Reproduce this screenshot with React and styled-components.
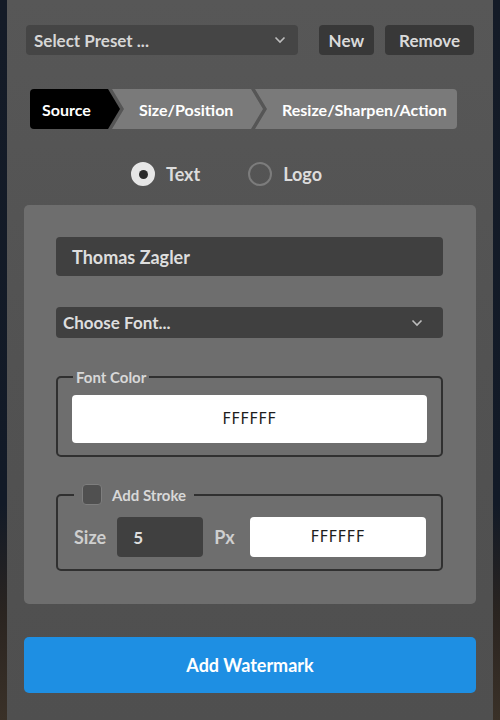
import React, { useState } from 'react';
import styled, { createGlobalStyle } from 'styled-components';

const GlobalStyle = createGlobalStyle`
  html, body {
    margin: 0;
    padding: 0;
    background: #121925;
  }
  body {
    font-family: 'Source Sans Pro', Lato, 'Liberation Sans', sans-serif;
  }
  * {
    box-sizing: border-box;
  }
`;

const Backdrop = styled.div`
  width: 500px;
  height: 720px;
  padding: 0 7px;
  background: linear-gradient(180deg, #141b27 0%, #121a27 70%, #2a2420 85%, #3a3128 100%);
`;

const Panel = styled.div`
  height: 720px;
  background: linear-gradient(180deg, #575757 0%, #525252 50%, #4f4f4f 100%);
  padding: 25px 17px 0 17px;
  display: flex;
  flex-direction: column;
`;

const TopBar = styled.div`
  display: flex;
  align-items: center;
  padding: 0 2px;
  gap: 11px;
`;

const PresetSelect = styled.div`
  width: 273px;
  height: 30px;
  margin-right: 10px;
  background: #454545;
  border-radius: 4px;
  display: flex;
  align-items: center;
  justify-content: space-between;
  padding: 0 12px 0 8px;
  color: #d6d6d6;
  font-size: 17px;
  font-weight: 700;
`;

const DarkButton = styled.button`
  height: 30px;
  padding: 0 ${({ $pad }) => $pad}px;
  background: #383838;
  border: none;
  border-radius: 4px;
  color: #dadada;
  font-family: inherit;
  font-size: 17px;
  font-weight: 700;
`;

const Steps = styled.div`
  display: flex;
  margin: 34px 0 0 6px;
  height: 40px;
`;

const Step = styled.div`
  height: 40px;
  display: flex;
  align-items: center;
  color: #fff;
  font-size: 16px;
  font-weight: 700;
  background: ${({ $active }) => ($active ? '#000' : '#7a7a7a')};
  border-radius: ${({ $first, $last }) => ($first ? '4px 0 0 4px' : $last ? '0 4px 4px 0' : '0')};
  width: ${({ $w }) => $w}px;
  margin-left: ${({ $first }) => ($first ? 0 : -8)}px;
  padding-left: ${({ $first }) => ($first ? 12 : 27)}px;
  clip-path: ${({ $first, $last }) =>
    $first
      ? 'polygon(0 0, calc(100% - 12px) 0, 100% 50%, calc(100% - 12px) 100%, 0 100%)'
      : $last
      ? 'polygon(0 0, 100% 0, 100% 100%, 0 100%, 12px 50%)'
      : 'polygon(0 0, calc(100% - 12px) 0, 100% 50%, calc(100% - 12px) 100%, 0 100%, 12px 50%)'};
`;

const RadioRow = styled.div`
  display: flex;
  gap: 48px;
  margin: 33px 0 0 107px;
  height: 24px;
`;

const RadioLabel = styled.label`
  display: flex;
  align-items: center;
  gap: 11px;
  color: #dcdcdc;
  font-size: 18px;
  font-weight: 700;
`;

const RadioCircle = styled.span`
  width: 24px;
  height: 24px;
  border-radius: 50%;
  display: flex;
  align-items: center;
  justify-content: center;
  background: ${({ $on }) => ($on ? '#e6e6e6' : 'transparent')};
  border: 2px solid ${({ $on }) => ($on ? '#e6e6e6' : '#7c7c7c')};

  &::after {
    content: '';
    width: 9px;
    height: 9px;
    border-radius: 50%;
    background: ${({ $on }) => ($on ? '#2a2a2a' : 'transparent')};
  }
`;

const Card = styled.div`
  margin-top: 19px;
  background: #6e6e6e;
  border-radius: 5px;
  padding: 32px 33px 33px 32px;
  display: flex;
  flex-direction: column;
`;

const NameInput = styled.div`
  height: 39px;
  background: #404040;
  border-radius: 4px;
  display: flex;
  align-items: center;
  padding-left: 16px;
  color: #dedede;
  font-size: 18px;
  font-weight: 700;
`;

const FontSelect = styled.div`
  height: 31px;
  margin-top: 31px;
  background: #404040;
  border-radius: 4px;
  display: flex;
  align-items: center;
  justify-content: space-between;
  padding: 0 20px 0 7px;
  color: #dedede;
  font-size: 17px;
  font-weight: 700;
`;

const Fieldset = styled.fieldset`
  margin: ${({ $top }) => $top}px 0 0 0;
  border: 2px solid #303030;
  border-radius: 5px;
  padding: ${({ $pad }) => $pad};
  min-width: 0;
`;

const Legend = styled.legend`
  margin-left: ${({ $ml }) => $ml}px;
  padding: 0 ${({ $px }) => $px}px;
  color: #d8d8d8;
  font-size: 15px;
  font-weight: 700;
  display: flex;
  align-items: center;
  gap: 10px;
`;

const Check = styled.span`
  width: 20px;
  height: 21px;
  border-radius: 4px;
  background: #505050;
  border: 1px solid #7e7e7e;
`;

const ColorBox = styled.div`
  height: ${({ $h }) => $h}px;
  flex: ${({ $grow }) => ($grow ? 1 : 'none')};
  background: #fff;
  border-radius: 4px;
  display: flex;
  align-items: center;
  justify-content: center;
  color: #1e1e1e;
  font-family: 'DejaVu Sans', 'Liberation Sans', sans-serif;
  font-size: 15px;
  letter-spacing: 0.4px;
`;

const StrokeRow = styled.div`
  display: flex;
  align-items: center;
`;

const RowLabel = styled.span`
  color: #cfcfcf;
  font-size: 18px;
  font-weight: 700;
  margin-right: ${({ $mr }) => $mr}px;
`;

const SizeInput = styled.div`
  width: 86px;
  height: 40px;
  background: #404040;
  border-radius: 4px;
  display: flex;
  align-items: center;
  padding-left: 16px;
  color: #dedede;
  font-size: 17px;
  font-weight: 700;
  margin-right: 11px;
`;

const SubmitButton = styled.button`
  margin-top: 33px;
  height: 56px;
  background: #1e8fe3;
  border: none;
  border-radius: 5px;
  color: #fff;
  font-family: inherit;
  font-size: 18px;
  font-weight: 700;
`;

const Chevron = () => (
  <svg width="12" height="8" viewBox="0 0 12 8">
    <path d="M1.5 1.5 L6 6 L10.5 1.5" fill="none" stroke="#bdbdbd" strokeWidth="1.6" />
  </svg>
);

export default function App() {
  const [mode, setMode] = useState('text');
  return (
    <>
      <GlobalStyle />
      <Backdrop>
        <Panel>
          <TopBar>
            <PresetSelect>
              <span>Select Preset ...</span>
              <Chevron />
            </PresetSelect>
            <DarkButton $pad={10}>New</DarkButton>
            <DarkButton $pad={14}>Remove</DarkButton>
          </TopBar>

          <Steps>
            <Step $first $active $w={90}>Source</Step>
            <Step $w={151}>Size/Position</Step>
            <Step $last $w={202}>Resize/Sharpen/Action</Step>
          </Steps>

          <RadioRow>
            <RadioLabel onClick={() => setMode('text')}>
              <RadioCircle $on={mode === 'text'} />
              Text
            </RadioLabel>
            <RadioLabel onClick={() => setMode('logo')}>
              <RadioCircle $on={mode === 'logo'} />
              Logo
            </RadioLabel>
          </RadioRow>

          <Card>
            <NameInput>Thomas Zagler</NameInput>
            <FontSelect>
              <span>Choose Font...</span>
              <Chevron />
            </FontSelect>

            <Fieldset $top={30} $pad="9px 14px 12px 14px">
              <Legend $ml={1} $px={3}>Font Color</Legend>
              <ColorBox $h={48}>FFFFFF</ColorBox>
            </Fieldset>

            <Fieldset $top={27} $pad="12px 15px 12px 16px">
              <Legend $ml={0} $px={8}>
                <Check />
                Add Stroke
              </Legend>
              <StrokeRow>
                <RowLabel $mr={11}>Size</RowLabel>
                <SizeInput>5</SizeInput>
                <RowLabel $mr={15}>Px</RowLabel>
                <ColorBox $h={40} $grow>FFFFFF</ColorBox>
              </StrokeRow>
            </Fieldset>
          </Card>

          <SubmitButton>Add Watermark</SubmitButton>
        </Panel>
      </Backdrop>
    </>
  );
}
